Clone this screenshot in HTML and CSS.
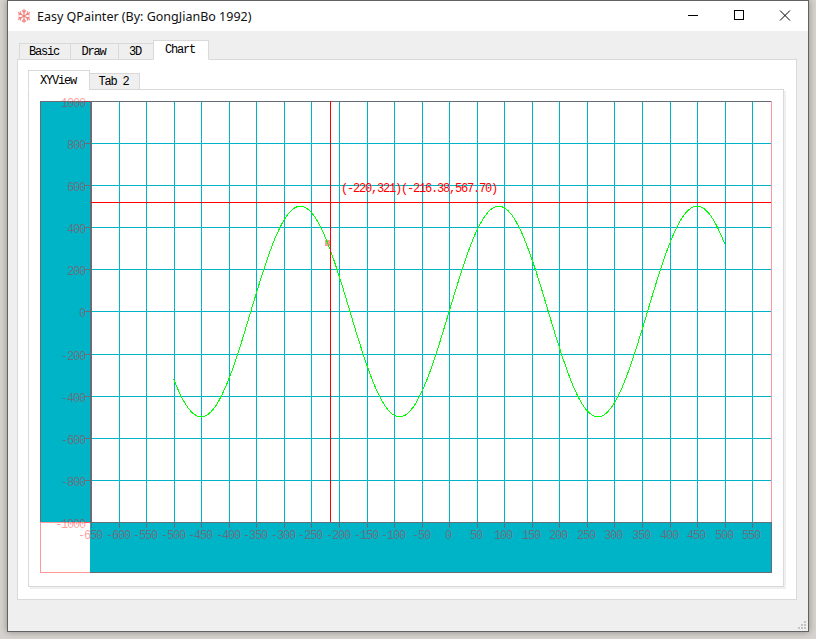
FILE: index.html
```html
<!DOCTYPE html>
<html lang="en">
<head>
  <meta charset="UTF-8">
  <meta name="viewport" content="width=device-width, initial-scale=1.0">
  <title>Easy QPainter</title>
  <link rel="stylesheet" href="styles.css">
</head>
<body>
  <div class="window">
    <div class="title-bar">
      <svg class="app-icon" width="14" height="14" viewBox="-7 -7 14 14">
        <g id="arms">
          <path d="M0 0V-7M-2 -5.5L0 -3.5L2 -5.5"/>
          <path d="M0 0V-7M-2 -5.5L0 -3.5L2 -5.5" transform="rotate(60)"/>
          <path d="M0 0V-7M-2 -5.5L0 -3.5L2 -5.5" transform="rotate(120)"/>
          <path d="M0 0V-7M-2 -5.5L0 -3.5L2 -5.5" transform="rotate(180)"/>
          <path d="M0 0V-7M-2 -5.5L0 -3.5L2 -5.5" transform="rotate(240)"/>
          <path d="M0 0V-7M-2 -5.5L0 -3.5L2 -5.5" transform="rotate(300)"/>
        </g>
      </svg>
      <span class="title-text">Easy QPainter (By: GongJianBo 1992)</span>
      <div class="controls">
        <span class="control">
          <svg width="12" height="12" viewBox="0 0 12 12"><path d="M1 5.5H11"/></svg>
        </span>
        <span class="control">
          <svg width="12" height="12" viewBox="0 0 12 12"><rect x="1.5" y="0.5" width="9" height="9"/></svg>
        </span>
        <span class="control">
          <svg width="12" height="12" viewBox="0 0 12 12"><path class="smooth" d="M1 0.5L11 10.5M11 0.5L1 10.5"/></svg>
        </span>
      </div>
    </div>

    <div class="main">
      <div class="tabs tabs-outer">
        <span class="tab tab-basic">Basic</span>
        <span class="tab tab-draw">Draw</span>
        <span class="tab tab-3d">3D</span>
        <span class="tab tab-chart active">Chart</span>
      </div>
      <div class="pane pane-outer">
        <div class="tabs tabs-inner">
          <span class="tab tab-xy active">XYView</span>
          <span class="tab tab-two">Tab 2</span>
        </div>
        <div class="pane pane-inner">
          <svg id="chart" class="chart" width="732" height="472" viewBox="40 101 732 472"></svg>
        </div>
      </div>
    </div>

    <svg class="grip" width="10" height="10" viewBox="0 0 10 10">
      <path d="M7 1h2v2h-2zM4 4h2v2h-2zM7 4h2v2h-2zM1 7h2v2h-2zM4 7h2v2h-2zM7 7h2v2h-2z"/>
    </svg>
  </div>
  <script src="chart.js"></script>
</body>
</html>
```

FILE: styles.css
```css
* { margin: 0px; padding: 0px; box-sizing: border-box; }
body { width: 816px; height: 639px; overflow: hidden; padding-left: 7px; background-color: #d6d3cf; font-family: "Liberation Mono", monospace; }

.window { position: relative; width: 802px; height: 632px; display: flex; flex-direction: column; border: 1px solid #626262; background-color: #efefef; box-shadow: 0 0 7px rgba(0, 0, 0, 0.35); }

.title-bar { height: 30px; display: flex; align-items: center; padding-left: 9px; background-color: #fff; }
.app-icon { fill: none; stroke: #ee8480; stroke-width: 1.2; }
.title-text { margin-left: 6px; font-family: "Noto Sans", sans-serif; font-size: 12.5px; color: #111; }
.controls { margin-left: auto; display: flex; }
.control { width: 46px; height: 30px; display: flex; align-items: center; justify-content: center; }
.control svg { fill: none; stroke: #000; stroke-width: 1; shape-rendering: crispEdges; }
.control svg .smooth { shape-rendering: auto; }

.main { flex: 1; display: flex; flex-direction: column; padding: 9px 11px 31px 9px; }

.tabs { display: flex; align-items: flex-end; position: relative; z-index: 1; margin-bottom: -1px; }
.tabs-outer { height: 20px; margin-left: 2px; }
.tabs-inner { height: 20px; }
.tab { height: 17px; display: flex; align-items: center; justify-content: center; padding-right: 2px; margin-right: -1px; border: 1px solid #d9d9d9; background-color: #efefef; font-size: 12px; letter-spacing: -1.2px; color: #000; }
.tab.active { height: 20px; border-bottom-color: #fff; background-color: #fff; }
.tab-xy { padding-top: 2px; }
.tab-basic { width: 52px; }
.tab-draw { width: 49px; }
.tab-3d { width: 36px; }
.tab-chart { width: 56px; }
.tab-xy { width: 62px; }
.tab-two { width: 51px; }

.pane { border: 1px solid #d9d9d9; background-color: #fff; }
.pane-outer { flex: 1; display: flex; flex-direction: column; padding: 10px 12px 12px 10px; }
.pane-inner { flex: 1; padding: 11px; box-shadow: 2px 2px 0 #efefef; }

.chart { display: block; overflow: visible; font-size: 12px; letter-spacing: -1.2px; }
.chart line, .chart rect, .chart polyline { shape-rendering: crispEdges; }
.band { fill: #00b4c8; }
.grid { stroke: #00b4c8; }
.axis { stroke: rgba(255, 0, 0, 0.4); fill: none; }
.label { fill: rgba(255, 0, 0, 0.4); }
.curve { stroke: #00ff00; fill: none; }
.cross { stroke: #ff0000; }
.cross-label { fill: #ff0000; }
.marker { fill: rgba(255, 0, 0, 0.4); }

.grip { position: absolute; right: 1px; bottom: 1px; fill: #c4c4c4; }
```

FILE: chart.js
```js
window.onload = function(){
  var svg = document.getElementById('chart');

  // value -> pixel, same scale as the reference chart
  function px( v ){ return Math.round( 91 + ( v + 650 ) * 0.551 ) + 0.5; }
  function py( v ){ return Math.floor( 311.9 - v * 0.2105 ) + 0.5; }

  function add( tag, attrs, text ){
    var el = document.createElementNS( 'http://www.w3.org/2000/svg', tag );
    for( var k in attrs ){ el.setAttribute( k, attrs[k] ); }
    if( text !== undefined ){ el.textContent = text; }
    svg.appendChild( el );
    return el;
  }

  function line( x1, y1, x2, y2, cls ){
    add( 'line', { x1: x1, y1: y1, x2: x2, y2: y2, 'class': cls } );
  }

  // axis backgrounds
  add( 'rect', { x: 40, y: 101, width: 51, height: 421, 'class': 'band' } );
  add( 'rect', { x: 90, y: 522, width: 682, height: 51, 'class': 'band' } );

  var v;
  // grid
  for( v = -650; v <= 550; v += 50 ){ line( px(v), 101, px(v), 523, 'grid' ); }
  for( v = -1000; v <= 1000; v += 200 ){ line( 91, py(v), 771, py(v), 'grid' ); }

  // frame
  add( 'rect', { x: 40.5, y: 101.5, width: 731, height: 471, 'class': 'axis' } );
  line( 90.5, 102, 90.5, 522, 'axis' );
  line( 91.5, 102, 91.5, 522, 'axis' );
  line( 41, 522.5, 771, 522.5, 'axis' );

  // ticks and labels
  for( v = -650; v <= 550; v += 50 ){
    line( px(v), 523, px(v), 528, 'axis' );
    add( 'text', { x: px(v) - 1.5, y: 539, 'text-anchor': 'middle', 'class': 'label' }, v );
  }
  for( v = -1000; v <= 1000; v += 200 ){
    line( 85, py(v), 90, py(v), 'axis' );
    add( 'text', { x: 85, y: py(v) + 5, 'text-anchor': 'end', 'class': 'label' }, v );
  }

  // sine curve
  var pts = [];
  for( v = -500; v <= 500; v += 1 ){
    pts.push( ( 91 + ( v + 650 ) * 0.551 ).toFixed(1) + ',' + ( 311.5 - 500 * Math.sin( v * Math.PI / 180 ) * 0.2105 ).toFixed(1) );
  }
  add( 'rect', { x: 325, y: 240, width: 6, height: 6, 'class': 'marker' } );
  add( 'polyline', { points: pts.join(' '), 'class': 'curve' } );

  // mouse crosshair
  line( 330.5, 101, 330.5, 522, 'cross' );
  line( 91, 202.5, 771, 202.5, 'cross' );
  add( 'text', { x: 341, y: 192, 'class': 'cross-label' }, '(-220,321)(-216.38,567.70)' );
};
```
